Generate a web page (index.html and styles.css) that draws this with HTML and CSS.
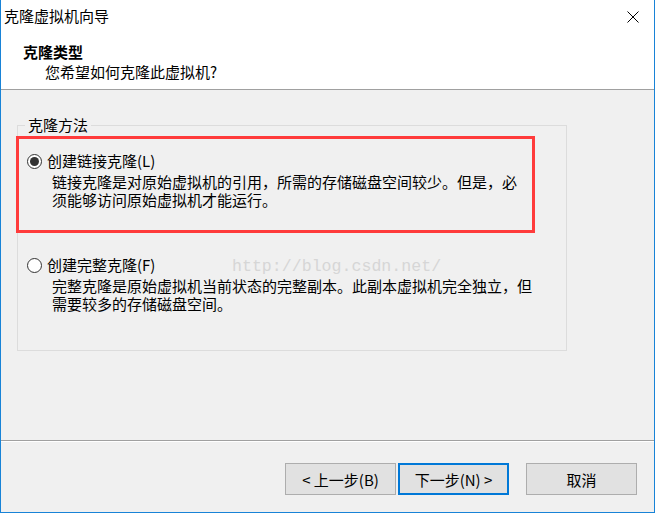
FILE: index.html
```html
<!DOCTYPE html>
<html>
<head>
<title>克隆虚拟机向导</title>
<link rel="stylesheet" href="styles.css">
</head>
<body>

<div class="window">
  <div class="titlebar">
    <span class="title">克隆虚拟机向导</span>
    <svg class="close" width="12" height="12" viewBox="0 0 12 12">
      <path d="M0.5 0.5 L11.5 11.5 M11.5 0.5 L0.5 11.5" stroke="#000" stroke-width="1" fill="none"/>
    </svg>
  </div>

  <div class="header">
    <div class="header-title">克隆类型</div>
    <div class="header-sub">您希望如何克隆此虚拟机?</div>
  </div>

  <div class="body">
    <div class="group">
      <span class="group-title">克隆方法</span>

      <div class="option highlight">
        <div class="option-row">
          <span class="radio checked"></span>
          <span class="option-label">创建链接克隆(L)</span>
        </div>
        <div class="option-desc">
          <div>链接克隆是对原始虚拟机的引用，所需的存储磁盘空间较少。但是，必</div>
          <div>须能够访问原始虚拟机才能运行。</div>
        </div>
      </div>

      <div class="option second">
        <div class="option-row">
          <span class="radio"></span>
          <span class="option-label">创建完整克隆(F)</span>
        </div>
        <div class="option-desc">
          <div>完整克隆是原始虚拟机当前状态的完整副本。此副本虚拟机完全独立，但</div>
          <div>需要较多的存储磁盘空间。</div>
        </div>
      </div>
    </div>
  </div>

  <div class="footer">
    <button class="btn">&lt; 上一步(B)</button>
    <button class="btn primary">下一步(N) &gt;</button>
    <button class="btn cancel">取消</button>
  </div>

  <div class="watermark">http://blog.csdn.net/</div>
</div>

</body>
</html>
```

FILE: styles.css
```css
html, body {
  margin: 0;
  padding: 0;
}
body {
  font-family: "Noto Sans CJK SC", "Noto Sans", sans-serif;
  font-size: 15px;
  color: #000;
  background: #f0f0f0;
}
.window {
  position: relative;
  width: 655px;
  height: 513px;
  box-sizing: border-box;
  border: 1px solid #1883d7;
  border-top: none;
  background: #f0f0f0;
  display: flex;
  flex-direction: column;
  overflow: hidden;
}
.titlebar {
  height: 32px;
  flex: none;
  background: #fff;
  display: flex;
  align-items: center;
  justify-content: space-between;
  padding: 0 15px 0 3px;
}
.title {
  line-height: 20px;
}
.close {
  display: block;
  margin-top: 1px;
}
.header {
  height: 58px;
  flex: none;
  background: #fff;
  border-bottom: 1px solid #a0a0a0;
  box-sizing: border-box;
  padding: 10px 0 0 22px;
}
.header-title {
  font-weight: bold;
  line-height: 20px;
}
.header-sub {
  line-height: 20px;
  padding-left: 22px;
}
.body {
  flex: 1;
  padding: 35px 0 0 16px;
}
.group {
  position: relative;
  width: 550px;
  height: 226px;
  box-sizing: border-box;
  border: 1px solid #dcdcdc;
  padding-top: 10px;
}
.group-title {
  position: absolute;
  top: -11px;
  left: 7px;
  padding: 0 3px;
  line-height: 20px;
  background: #f0f0f0;
}
.option-row {
  display: flex;
  align-items: center;
  height: 20px;
}
.radio {
  width: 15px;
  height: 15px;
  box-sizing: border-box;
  border: 1px solid #333;
  border-radius: 50%;
  background: #fff;
  display: flex;
  align-items: center;
  justify-content: center;
  margin-right: 5px;
}
.radio.checked::after {
  content: "";
  width: 9px;
  height: 9px;
  border-radius: 50%;
  background: #333;
}
.option-label {
  line-height: 20px;
}
.option-desc {
  margin-top: 2px;
  padding-left: 25px;
  line-height: 18px;
  white-space: nowrap;
}
.highlight {
  margin-left: -2px;
  width: 519px;
  box-sizing: border-box;
  border: 3px solid #ff3b3b;
  padding: 12px 0 21px 8px;
}
.second {
  margin-top: 22px;
  padding-left: 9px;
}
.footer {
  height: 72px;
  flex: none;
  box-sizing: border-box;
  border-top: 1px solid #a0a0a0;
  box-shadow: inset 0 1px 0 #fff;
  display: flex;
  align-items: flex-start;
  justify-content: flex-end;
  padding: 22px 17px 0 0;
}
.btn {
  width: 111px;
  height: 32px;
  box-sizing: border-box;
  border: 1px solid #adadad;
  background: #e1e1e1;
  font-family: "Noto Sans CJK SC", "Noto Sans", sans-serif;
  font-size: 15px;
  color: #000;
  padding: 0;
  margin: 0;
}
.btn.primary {
  border: 2px solid #0078d7;
  margin-left: 2px;
}
.btn.cancel {
  margin-left: 17px;
}
.watermark {
  position: absolute;
  left: 231px;
  top: 257px;
  font-family: "Liberation Mono", monospace;
  font-size: 16.6px;
  line-height: 20px;
  color: #d6d6d6;
}
```
